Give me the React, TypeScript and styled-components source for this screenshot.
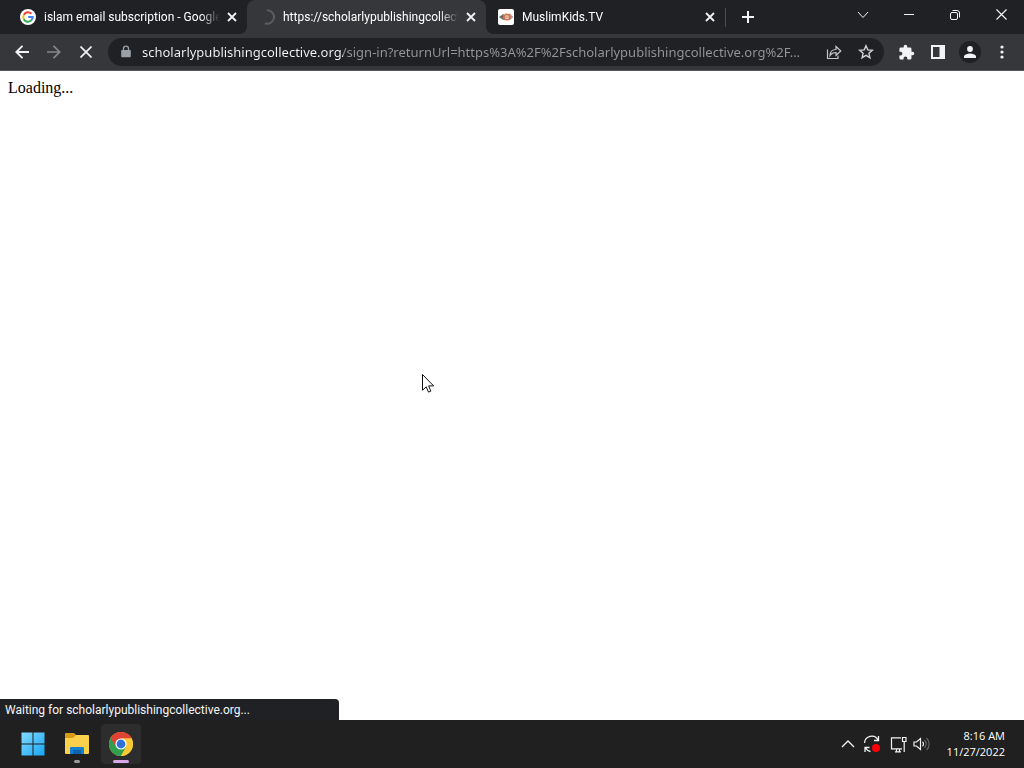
import React from 'react';
import styled, { createGlobalStyle } from 'styled-components';

const GlobalStyle = createGlobalStyle`
  * { box-sizing: border-box; }
  html, body, #root { height: 100%; }
  body { margin: 0; background: #fff; overflow: hidden; }
  button, input { font: inherit; color: inherit; }
`;

const Desktop = styled.div`
  display: flex;
  flex-direction: column;
  min-height: 100vh;
  font-family: Roboto, 'Noto Sans', sans-serif;
  font-size: 12px;
  color: #fff;
`;

const BareButton = styled.button`
  display: flex;
  align-items: center;
  justify-content: center;
  padding: 0;
  border: 0;
  background: none;
  color: #f1f3f4;
  flex: none;
  svg { display: block; }
`;

const TabStrip = styled.header`
  display: flex;
  height: 34px;
  background: #202125;
  padding-left: 8px;
`;

const Tabs = styled.div`
  display: flex;
  flex: 0 1 717px;
  min-width: 0;
`;

const Tab = styled.div<{ $active?: boolean }>`
  position: relative;
  display: flex;
  align-items: center;
  flex: 1 1 0;
  min-width: 0;
  gap: 4px;
  padding: 0 7px 0 12px;
  background: ${p => (p.$active ? '#36373b' : 'transparent')};
  border-radius: 8px 8px 0 0;
  ${p => p.$active && `
    &::before, &::after {
      content: '';
      position: absolute;
      bottom: 0;
      width: 8px;
      height: 8px;
    }
    &::before { left: -8px; background: radial-gradient(circle at 0 0, transparent 8px, #36373b 8px); }
    &::after { right: -8px; background: radial-gradient(circle at 100% 0, transparent 8px, #36373b 8px); }
  `}
`;

const TabTitle = styled.button`
  flex: 1;
  min-width: 0;
  display: flex;
  align-items: center;
  gap: 8px;
  padding: 0;
  border: 0;
  background: none;
  text-align: left;
  line-height: 16px;
  svg { flex: none; }
  span {
    flex: 1;
    overflow: hidden;
    white-space: nowrap;
    mask-image: linear-gradient(to right, #000 calc(100% - 20px), transparent);
  }
`;

const TabClose = styled(BareButton)`
  width: 16px;
  height: 16px;
`;

const NewTab = styled(BareButton)`
  width: 46px;
  position: relative;
  &::before {
    content: '';
    position: absolute;
    left: 0;
    top: 8px;
    width: 1px;
    height: 19px;
    background: #4a4c50;
  }
`;

const WindowControls = styled.div`
  display: flex;
  margin-left: auto;
  height: 29px;
`;

const WindowButton = styled(BareButton)`
  width: 46px;
`;

const Toolbar = styled.nav`
  display: flex;
  align-items: center;
  height: 37px;
  padding: 0 6px;
  background: #36373b;
  border-bottom: 1px solid #55565a;
`;

const ToolButton = styled(BareButton)<{ $dim?: boolean }>`
  width: 32px;
  height: 28px;
  color: ${p => (p.$dim ? '#85878a' : '#f1f3f4')};
`;

const AddressBar = styled.form`
  display: flex;
  align-items: center;
  flex: 1;
  min-width: 0;
  height: 28px;
  margin: 0 6px;
  padding: 0 2px 0 12px;
  border-radius: 14px;
  background: #202125;
`;

const UrlInput = styled.input`
  flex: 1;
  min-width: 0;
  height: 24px;
  margin-left: 10px;
  padding: 0;
  border: 0;
  outline: 0;
  font-family: 'Noto Sans', sans-serif;
  font-size: 13px;
  color: transparent;
  background: linear-gradient(to right, #f5f6f7 201px, #94969a 201px);
  background-clip: text;
  -webkit-background-clip: text;
`;

const Avatar = styled.span`
  display: flex;
  align-items: center;
  justify-content: center;
  width: 22px;
  height: 22px;
  border-radius: 50%;
  background: #202125;
`;

const Page = styled.main`
  position: relative;
  flex: 1;
  padding: 8px;
  background: #fff;
  color: #000;
  font-family: 'Liberation Serif', serif;
  font-size: 16px;
  line-height: 18px;
`;

const StatusBubble = styled.div`
  position: absolute;
  left: 0;
  bottom: 0;
  width: 33.1%;
  height: 21px;
  padding-left: 5px;
  border-radius: 0 4px 0 0;
  background: #202125;
  color: #f5f6f7;
  font-family: Roboto, sans-serif;
  font-size: 12px;
  line-height: 22px;
  white-space: nowrap;
`;

const Pointer = styled.svg`
  position: absolute;
  left: 421px;
  top: 302px;
`;

const Taskbar = styled.footer`
  display: flex;
  align-items: center;
  height: 48px;
  padding: 0 19px 0 13px;
  background: #202020;
`;

const AppButton = styled(BareButton)<{ $active?: boolean; $mark?: string }>`
  position: relative;
  width: 40px;
  height: 40px;
  margin-right: 4px;
  border-radius: 4px;
  background: ${p => (p.$active ? '#2d2d2d' : 'transparent')};
  &::after {
    content: '';
    display: ${p => (p.$mark ? 'block' : 'none')};
    position: absolute;
    bottom: 1px;
    width: ${p => (p.$active ? '16px' : '6px')};
    height: 3px;
    border-radius: 2px;
    background: ${p => p.$mark};
  }
`;

const Tray = styled.div`
  display: flex;
  align-items: center;
  margin-left: auto;
`;

const TrayButton = styled(BareButton)<{ $width?: number }>`
  width: ${p => p.$width ?? 24}px;
  height: 32px;
`;

const Clock = styled.button`
  width: 75px;
  padding: 0;
  border: 0;
  background: none;
  font-family: 'Open Sans', sans-serif;
  font-size: 11px;
  line-height: 16px;
  text-align: right;
  time { display: block; }
`;

const CloseGlyph = () => (
  <svg width="10" height="10" viewBox="0 0 10 10" stroke="currentColor" strokeWidth="1.8">
    <path d="M1 1l8 8M9 1L1 9" />
  </svg>
);

const GoogleIcon = () => (
  <svg width="16" height="16" viewBox="0 0 16 16">
    <circle cx="8" cy="8" r="8" fill="#fff" />
    <g fill="none" strokeWidth="2">
      <path d="M11.4 4.7A4.7 4.7 0 0 0 3.8 5.9" stroke="#ea4335" />
      <path d="M3.8 5.9a4.7 4.7 0 0 0 0 4.2" stroke="#fbbc05" />
      <path d="M3.8 10.1a4.7 4.7 0 0 0 7.3 1.5" stroke="#34a853" />
      <path d="M11.1 11.6A4.6 4.6 0 0 0 12.7 8H8.2" stroke="#4285f4" />
    </g>
  </svg>
);

const Spinner = () => (
  <svg width="16" height="16" viewBox="0 0 16 16" fill="none" stroke="#5a5c60" strokeWidth="2">
    <path d="M8 1.3A6.7 6.7 0 1 1 5.8 14.2" />
  </svg>
);

const KidsIcon = () => (
  <svg width="16" height="16" viewBox="0 0 16 16">
    <rect width="16" height="16" rx="2" fill="#fff" />
    <path d="M1 8l4-3v6z" fill="#66796a" />
    <path d="M15.5 8L12 5v6z" fill="#a9a19b" />
    <path d="M5 5l2 .5L8 4l1.500 1L12 4.500l1 3.500-1 3-3 .500L5 11z" fill="#cf7350" />
    <path d="M7.500 6.500h3v3.500h-3z" fill="#f8e3cf" />
    <path d="M8.500 7.500h1v1.500h-1zM3 7h2v1H3z" fill="#a34432" />
  </svg>
);

const ChromeIcon = () => (
  <svg width="24" height="24" viewBox="0 0 24 24">
    <circle cx="12" cy="12" r="12" fill="#fbc934" />
    <path d="M12 12L1.6 6A12 12 0 0 0 12 24l5.2-9z" fill="#2f9e4f" />
    <path d="M12 6.6h10.7A12 12 0 0 0 1.6 6l5.6 9.3z" fill="#df4334" />
    <path d="M12 6.6h10.7A12 12 0 0 1 12 24l5-9z" fill="#fbc934" />
    <circle cx="12" cy="12" r="5.6" fill="#fff" />
    <circle cx="12" cy="12" r="4.4" fill="#2d72dc" />
  </svg>
);

const tabs = [
  { title: 'islam email subscription - Google', Icon: GoogleIcon },
  { title: 'https://scholarlypublishingcollect', Icon: Spinner, active: true },
  { title: 'MuslimKids.TV', Icon: KidsIcon },
];

export default function App() {
  return (
    <Desktop>
      <GlobalStyle />
      <TabStrip>
        <Tabs>
          {tabs.map(({ title, Icon, active }) => (
            <Tab key={title} $active={active}>
              <TabTitle><Icon /><span>{title}</span></TabTitle>
              <TabClose aria-label="Close tab"><CloseGlyph /></TabClose>
            </Tab>
          ))}
        </Tabs>
        <NewTab aria-label="New tab">
          <svg width="12" height="12" viewBox="0 0 12 12" stroke="currentColor" strokeWidth="2"><path d="M6 0v12M0 6h12" /></svg>
        </NewTab>
        <WindowControls>
          <WindowButton aria-label="Search tabs">
            <svg width="12" height="8" viewBox="0 0 12 8" fill="none" stroke="currentColor"><path d="M1 1l5 5.5L11 1" /></svg>
          </WindowButton>
          <WindowButton aria-label="Minimize">
            <svg width="10" height="1" viewBox="0 0 10 1"><path d="M0 0h10v1H0z" fill="currentColor" /></svg>
          </WindowButton>
          <WindowButton aria-label="Restore">
            <svg width="10" height="10" viewBox="0 0 10 10" fill="none" stroke="currentColor">
              <rect x=".5" y="2.5" width="7" height="7" rx="1.5" />
              <path d="M2.5.5H7A2.5 2.5 0 0 1 9.5 3v4.500" />
            </svg>
          </WindowButton>
          <WindowButton aria-label="Close window">
            <svg width="11" height="11" viewBox="0 0 11 11" stroke="currentColor" strokeWidth="1.2"><path d="M.5.5l10 10M10.5.5l-10 10" /></svg>
          </WindowButton>
        </WindowControls>
      </TabStrip>

      <Toolbar>
        <ToolButton aria-label="Back">
          <svg width="14" height="14" viewBox="0 0 14 14" fill="none" stroke="currentColor" strokeWidth="1.9"><path d="M14 7H1.5M7.5.8L1.3 7l6.2 6.2" /></svg>
        </ToolButton>
        <ToolButton aria-label="Forward" $dim>
          <svg width="14" height="14" viewBox="0 0 14 14" fill="none" stroke="currentColor" strokeWidth="1.7"><path d="M0 7h12.5M6.5.8L12.7 7l-6.2 6.2" /></svg>
        </ToolButton>
        <ToolButton aria-label="Stop">
          <svg width="12" height="12" viewBox="0 0 12 12" stroke="currentColor" strokeWidth="1.7"><path d="M.5.5l11 11M11.5.5l-11 11" /></svg>
        </ToolButton>
        <AddressBar>
          <svg width="12" height="14" viewBox="0 0 12 14">
            <path d="M2 5h8a.8.8 0 0 1 .8.8v5.7a.8.8 0 0 1-.8.8H2a.8.8 0 0 1-.8-.8V5.8A.8.8 0 0 1 2 5z" fill="#9aa0a6" />
            <path d="M3.5 5.5V3.7a2.5 2.5 0 0 1 5 0v1.8" fill="none" stroke="#9aa0a6" strokeWidth="1.3" />
          </svg>
          <UrlInput
            aria-label="Address"
            defaultValue="scholarlypublishingcollective.org/sign-in?returnUrl=https%3A%2F%2Fscholarlypublishingcollective.org%2F..."
          />
          <ToolButton type="button" aria-label="Share">
            <svg width="16" height="15" viewBox="0 0 16 15" fill="none" stroke="#c4c6c9" strokeWidth="1.2">
              <path d="M1.5 4.5v9h10.500v-3" />
              <path d="M4 10.5c.3-4 2.5-6 6-6V1.5L14.8 6 10 10.3V7.5c-2.8 0-4.5.8-6 3z" />
            </svg>
          </ToolButton>
          <ToolButton type="button" aria-label="Bookmark">
            <svg width="16" height="16" viewBox="0 0 16 16" fill="none" stroke="#d0d2d5" strokeWidth="1.4">
              <path d="M8 1.8l1.800 4.100 4.500.4-3.400 3 1 4.400L8 11.4l-3.900 2.300 1-4.400-3.400-3 4.500-.4z" />
            </svg>
          </ToolButton>
        </AddressBar>
        <ToolButton aria-label="Extensions">
          <svg width="17" height="17" viewBox="0 0 24 24" fill="currentColor">
            <path d="M20.5 11H19V7a2 2 0 0 0-2-2h-4V3.5a2.5 2.5 0 0 0-5 0V5H4a2 2 0 0 0-2 2v3.8h1.5a2.7 2.7 0 0 1 0 5.4H2V20a2 2 0 0 0 2 2h3.8v-1.5a2.7 2.7 0 0 1 5.4 0V22H17a2 2 0 0 0 2-2v-4h1.5a2.5 2.5 0 0 0 0-5z" />
          </svg>
        </ToolButton>
        <ToolButton aria-label="Side panel">
          <svg width="14" height="14" viewBox="0 0 14 14"><path fillRule="evenodd" d="M0 0h14v14H0zM2 2v10h6.5V2z" fill="currentColor" /></svg>
        </ToolButton>
        <ToolButton aria-label="Profile">
          <Avatar>
            <svg width="12" height="12" viewBox="0 0 12 12" fill="currentColor"><circle cx="6" cy="3" r="2.9" /><path d="M0 12v-1.5C0 8.5 4 7.5 6 7.5s6 1 6 3V12z" /></svg>
          </Avatar>
        </ToolButton>
        <ToolButton aria-label="Menu">
          <svg width="4" height="14" viewBox="0 0 4 14" fill="currentColor"><circle cx="2" cy="2" r="1.6" /><circle cx="2" cy="7" r="1.6" /><circle cx="2" cy="12" r="1.6" /></svg>
        </ToolButton>
      </Toolbar>

      <Page>
        Loading...
        <Pointer width="14" height="22" viewBox="0 0 14 22">
          <path d="M1.5 1.5v15.8l3.7-3.5 2.3 5.3 2.4-1-2.3-5.2h5z" fill="#fff" stroke="#111" />
        </Pointer>
        <StatusBubble>Waiting for scholarlypublishingcollective.org...</StatusBubble>
      </Page>

      <Taskbar>
        <AppButton aria-label="Start">
          <svg width="24" height="24" viewBox="0 0 24 24">
            <defs><linearGradient id="win" x1="0" y1="0" x2="1" y2="1"><stop stopColor="#83dcff" /><stop offset="1" stopColor="#16a5f5" /></linearGradient></defs>
            <path d="M.5.5h11v11H.5zM12.5.5h11v11h-11zM.5 12.5h11v11H.5zM12.5 12.5h11v11h-11z" fill="url(#win)" />
          </svg>
        </AppButton>
        <AppButton aria-label="File Explorer" $mark="#9a9a9a">
          <svg width="26" height="24" viewBox="0 0 26 24">
            <path d="M1 2a1 1 0 0 1 1-1h8l3 3v4H1z" fill="#d99a16" />
            <path d="M1 6h8l3-3h12a1 1 0 0 1 1 1v17a1 1 0 0 1-1 1H2a1 1 0 0 1-1-1z" fill="#fbd04b" />
            <path d="M6 22v-6a1 1 0 0 1 1-1h12a1 1 0 0 1 1 1v6z" fill="#1580d0" />
            <path d="M9 18h8v4H9z" fill="#0d62ac" />
          </svg>
        </AppButton>
        <AppButton aria-label="Chrome" $active $mark="#d9a6e6"><ChromeIcon /></AppButton>
        <Tray>
          <TrayButton aria-label="Show hidden icons">
            <svg width="14" height="8" viewBox="0 0 14 8" fill="none" stroke="currentColor" strokeWidth="1.3"><path d="M1 7l6-6 6 6" /></svg>
          </TrayButton>
          <TrayButton aria-label="Updates">
            <svg width="18" height="18" viewBox="0 0 18 18" fill="none" stroke="currentColor" strokeWidth="1.3">
              <path d="M1.5 8A7.2 7.2 0 0 1 15 5M15.5 1v4.500H11M2 17v-4.500h4.500M2.500 13a7 7 0 0 0 5 3.500" />
              <circle cx="13" cy="13" r="4" fill="#fb0007" stroke="none" />
            </svg>
          </TrayButton>
          <TrayButton aria-label="Network" $width={28}>
            <svg width="17" height="17" viewBox="0 0 17 17" fill="none" stroke="currentColor" strokeWidth="1.2">
              <path d="M11 1.800H1.500v11H12M5 15.800h6M6.500 13v3M9.500 13v3M12.500 1.500h3.500v4h-3.500zM14.200 5.500V16" />
            </svg>
          </TrayButton>
          <TrayButton aria-label="Volume" $width={18}>
            <svg width="17" height="14" viewBox="0 0 17 14" fill="none" stroke="currentColor" strokeWidth="1.2">
              <path d="M1 5v4h2.500L7.500 12.500v-11L3.500 5zM9.500 4.800a3 3 0 0 1 0 4.400" />
              <path d="M11.500 3a5.500 5.500 0 0 1 0 8M13.500 1a8 8 0 0 1 0 12" stroke="#666" />
            </svg>
          </TrayButton>
          <Clock><time>8:16 AM</time><time>11/27/2022</time></Clock>
        </Tray>
      </Taskbar>
    </Desktop>
  );
}
